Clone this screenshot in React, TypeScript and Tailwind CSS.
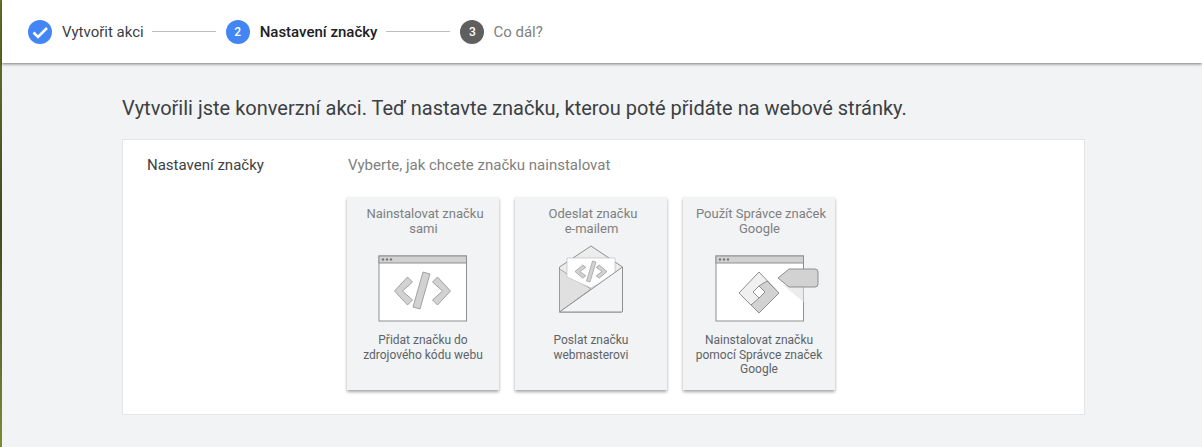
import React from "react";

const S = "#8f8f8f";
const F = "#d2d2d2";
const CHEV = "13,0 18,5 8,14 18,23 13,28 0,14";

function WindowFrame() {
  return (
    <>
      <rect x="1" y="1" width="87.5" height="65" fill="#fff" stroke={S} strokeWidth="1" />
      <rect x="1" y="1" width="87.5" height="7" fill={F} stroke={S} strokeWidth="1" />
      <circle cx="5" cy="4.5" r="1.2" fill="#777" />
      <circle cx="9" cy="4.5" r="1.2" fill="#777" />
      <circle cx="13" cy="4.5" r="1.2" fill="#777" />
    </>
  );
}

function CodeIcon() {
  return (
    <svg width="90" height="68" viewBox="0 0 90 68" className="block">
      <WindowFrame />
      <g transform="translate(16.5 22)"><polygon points={CHEV} fill={F} stroke={S} strokeWidth="0.8" strokeLinejoin="round" /></g>
      <g transform="translate(72.5 22) scale(-1 1)"><polygon points={CHEV} fill={F} stroke={S} strokeWidth="0.8" strokeLinejoin="round" /></g>
      <polygon points="45,17 52,19 42,54 35,52" fill={F} stroke={S} strokeWidth="0.8" strokeLinejoin="round" />
    </svg>
  );
}

function MailIcon() {
  return (
    <svg width="66" height="70" viewBox="0 0 66 70" className="block">
      <path d="M1.5 22 L33 1 L64.5 22 V66 a1 1 0 0 1 -1 1 H2.5 a1 1 0 0 1 -1 -1 Z" fill="#ececec" stroke={S} strokeWidth="1" strokeLinejoin="round" />
      <path d="M1.5 24 V67 L33 44 Z" fill="#e0e0e0" stroke={S} strokeWidth="0.7" />
      <path d="M9 13 H57 V30 L33 43 L9 32 Z" fill="#fff" stroke="#b5b5b5" strokeWidth="0.6" strokeLinejoin="round" />
      <path d="M1.5 67 L64.5 22 V66 a1 1 0 0 1 -1 1 Z" fill="#f1f3f4" stroke={S} strokeWidth="1" strokeLinejoin="round" />
      <g transform="translate(17 20) scale(0.6 0.47)"><polygon points={CHEV} fill={F} stroke={S} strokeWidth="1.2" strokeLinejoin="round" /></g>
      <g transform="translate(49 20) scale(-0.6 0.47)"><polygon points={CHEV} fill={F} stroke={S} strokeWidth="1.2" strokeLinejoin="round" /></g>
      <polygon points="34.5,16 38,17 32,37 28.5,36" fill={F} stroke={S} strokeWidth="0.6" strokeLinejoin="round" />
    </svg>
  );
}

function GtmIcon() {
  return (
    <svg width="104" height="68" viewBox="0 0 104 68" className="block">
      <WindowFrame />
      <polygon points="68,30 88.5,47 88.5,31" fill="#ececec" />
      <path d="M63 23 L74 14 H100 a3 3 0 0 1 3 3 V29 a3 3 0 0 1 -3 3 H74 Z" fill={F} stroke={S} strokeWidth="1" strokeLinejoin="round" />
      <polygon points="44,17 64,38 44,58 24,38" fill="#f0f0f0" stroke={S} strokeWidth="1" strokeLinejoin="round" />
      <polygon points="52,26 64,38 44,58 36,50 44,43 50,37 44,31" fill={F} stroke={S} strokeWidth="1" strokeLinejoin="round" />
      <polygon points="44,31 50,37 44,43 38,37" fill="#fff" stroke={S} strokeWidth="1" />
    </svg>
  );
}

function Step({ n, label, state }: { n: string; label: string; state: "done" | "active" | "todo" }) {
  return (
    <div className="flex items-center">
      {state === "done" ? (
        <svg width="24" height="24" viewBox="0 0 24 24" className="block">
          <circle cx="12" cy="12" r="12" fill="#4285f4" />
          <path d="M5.5 12.5 L10 17 L19 8" fill="none" stroke="#fff" strokeWidth="2.6" />
        </svg>
      ) : (
        <div
          className={`flex h-6 w-6 items-center justify-center rounded-full text-xs font-medium text-white ${
            state === "active" ? "bg-[#4285f4]" : "bg-[#5f5f5f]"
          }`}
        >
          {n}
        </div>
      )}
      <span
        className={`text-[15px] leading-5 ${
          state === "done"
            ? "ml-[10px] text-[#3c4043]"
            : state === "active"
              ? "ml-[10px] mr-px font-medium text-[#202124]"
              : "ml-[9px] text-[#808080]"
        }`}
      >
        {label}
      </span>
    </div>
  );
}

function Line() {
  return <div className="ml-2 mr-[10px] h-px w-16 bg-[#bdbdbd]" />;
}

function Choice({
  title,
  title2,
  desc,
  icon,
  iconClass,
}: {
  title: string;
  title2: string;
  desc: React.ReactNode;
  icon: React.ReactNode;
  iconClass: string;
}) {
  return (
    <div className="flex h-[193px] w-[152px] flex-col items-center bg-[#f1f3f4] pt-[9px] text-center shadow-[0_2px_3px_rgba(0,0,0,0.35)]">
      <div className="h-[30px] w-full text-[13px] leading-[15px] text-[#808080]">
        <div className="pl-1">{title}</div>
        <div className="pl-px">{title2}</div>
      </div>
      <div className={iconClass}>{icon}</div>
      <div className="text-xs leading-[14.5px] text-[#5f6368]">{desc}</div>
    </div>
  );
}

export default function App() {
  return (
    <div className="flex h-[447px] w-full overflow-hidden bg-[#f1f3f4] font-['Roboto',sans-serif]">
      <div className="w-[2px] shrink-0 bg-gradient-to-b from-[#6a7a2c] via-[#3d4a1c] to-[#7d8a3a]" />
      <div className="flex min-w-0 flex-1 flex-col">
        <header className="relative flex h-[63px] items-center bg-white pl-[26px] shadow-[0_1px_3px_rgba(0,0,0,0.5)]">
          <Step n="1" label="Vytvořit akci" state="done" />
          <Line />
          <Step n="2" label="Nastavení značky" state="active" />
          <Line />
          <Step n="3" label="Co dál?" state="todo" />
        </header>
        <main className="pl-[120px] pt-[32px]">
          <h1 className="h-[26px] text-[20px] leading-[26px] font-normal text-[#3c4043]">
            Vytvořili jste konverzní akci. Teď nastavte značku, kterou poté přidáte na webové stránky.
          </h1>
          <section className="mt-[18px] flex h-[276px] w-[963px] border border-[#e4e5e6] bg-white pl-6 pt-4">
            <div className="w-[200px] text-[15px] leading-[18px] text-[#3c4043]">Nastavení značky</div>
            <div>
              <div className="pl-px text-[15px] leading-[18px] text-[#808080]">Vyberte, jak chcete značku nainstalovat</div>
              <div className="mt-[23px] flex gap-4">
                <Choice
                  title="Nainstalovat značku"
                  title2="sami"
                  desc={<>Přidat značku do<br />zdrojového kódu webu</>}
                  icon={<CodeIcon />}
                  iconClass="mt-[19px] mb-[10px]"
                />
                <Choice
                  title="Odeslat značku"
                  title2="e-mailem"
                  desc={<>Poslat značku<br />webmasterovi</>}
                  icon={<MailIcon />}
                  iconClass="mt-[9px] mb-[18px]"
                />
                <Choice
                  title="Použít Správce značek"
                  title2="Google"
                  desc={<>Nainstalovat značku<br />pomocí Správce značek<br />Google</>}
                  icon={<GtmIcon />}
                  iconClass="mt-[19px] mb-[10px] ml-[16px]"
                />
              </div>
            </div>
          </section>
        </main>
      </div>
    </div>
  );
}
